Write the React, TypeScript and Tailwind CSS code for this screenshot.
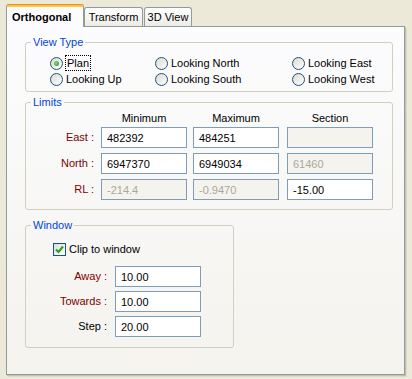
import React from "react";

function Radio({ checked }: { checked?: boolean }) {
  return (
    <span className="flex h-[13px] w-[13px] shrink-0 items-center justify-center rounded-full border border-[#1C5180] bg-linear-to-br from-[#DCD9CE] to-white">
      {checked && (
        <span className="h-[5px] w-[5px] rounded-full bg-[radial-gradient(circle_at_40%_40%,#7FDC7F,#1A961A)]" />
      )}
    </span>
  );
}

function RadioOption({ label, checked }: { label: string; checked?: boolean }) {
  return (
    <div className="flex h-[16px] items-center">
      <Radio checked={checked} />
      {checked ? (
        <span className="ml-[2px] border border-dotted border-black px-[1px] leading-[14px]">{label}</span>
      ) : (
        <span className="ml-[3px]">{label}</span>
      )}
    </div>
  );
}

function Field({ value, disabled }: { value: string; disabled?: boolean }) {
  return (
    <input
      readOnly
      value={value}
      className={
        "h-[21px] w-[86px] border border-[#7F9DB9] px-[5px] text-[11px] outline-none " +
        (disabled ? "bg-[#F4F3EE] text-[#ACA899]" : "bg-white text-black")
      }
    />
  );
}

function Group({ title, className, children }: { title: string; className: string; children: React.ReactNode }) {
  return (
    <fieldset className={"rounded-[3px] border border-[#D0D0BF] " + className}>
      <legend className="ml-[5px] px-[2px] leading-[13px] text-[#0046D5]">{title}</legend>
      {children}
    </fieldset>
  );
}

const limits = [
  { label: "East :", cells: [["482392"], ["484251"], ["", true]] },
  { label: "North :", cells: [["6947370"], ["6949034"], ["61460", true]] },
  { label: "RL :", cells: [["-214.4", true], ["-0.9470", true], ["-15.00"]] },
] as { label: string; cells: [string, boolean?][] }[];

export default function App() {
  return (
    <div className="h-[379px] w-[412px] bg-[#ECE9D8] pl-[6px] pt-[4px] font-['Liberation_Sans',Arial,sans-serif] text-[11px] text-black">
      {/* tabs */}
      <div className="flex h-[22px] items-end">
        <div className="relative z-10 -mb-px flex h-[23px] w-[78px] flex-col rounded-t-[3px] border-x border-[#919B9C] bg-[#FCFCFE]">
          <div className="h-[1px] rounded-t-[3px] bg-[#E68B2C]" />
          <div className="h-[2px] bg-[#FFC73C]" />
          <div className="pl-[5px] pt-[4px] font-bold leading-[13px]">Orthogonal</div>
        </div>
        <div className="flex h-[19px] w-[59px] items-center justify-center rounded-t-[3px] border-x border-t border-[#919B9C] bg-linear-to-b from-white to-[#ECEBE6]">
          Transform
        </div>
        <div className="ml-[1px] flex h-[19px] w-[48px] items-center justify-center rounded-t-[3px] border-x border-t border-[#919B9C] bg-linear-to-b from-white to-[#ECEBE6]">
          3D View
        </div>
      </div>

      {/* panel */}
      <div className="h-[349px] w-[399px] border border-[#919B9C] bg-linear-to-b from-[#FCFCFE] to-[#F4F3EE] pl-[18px] shadow-[1px_1px_0_#C4C1B2,2px_2px_0_#DCD9CA]">
        <Group title="View Type" className="mt-[9px] h-[56px] w-[368px]">
          <div className="mt-[6px] flex pl-[24px]">
            <div className="w-[105px]">
              <RadioOption label="Plan" checked />
              <RadioOption label="Looking Up" />
            </div>
            <div className="w-[137px]">
              <RadioOption label="Looking North" />
              <RadioOption label="Looking South" />
            </div>
            <div>
              <RadioOption label="Looking East" />
              <RadioOption label="Looking West" />
            </div>
          </div>
        </Group>

        <Group title="Limits" className="mt-[4px] h-[114px] w-[368px]">
          <div className="mt-[3px] flex h-[13px] items-center leading-[13px]">
            <div className="w-[75px]" />
            <div className="w-[86px] text-center">Minimum</div>
            <div className="ml-[6px] w-[86px] text-center">Maximum</div>
            <div className="ml-[8px] w-[86px] text-center">Section</div>
          </div>
          <div className="mt-[2px] flex flex-col gap-[5px]">
            {limits.map((row) => (
              <div key={row.label} className="flex items-center">
                <div className="w-[68px] text-right text-[#800000]">{row.label}</div>
                <div className="ml-[7px]">
                  <Field value={row.cells[0][0]} disabled={row.cells[0][1]} />
                </div>
                <div className="ml-[6px]">
                  <Field value={row.cells[1][0]} disabled={row.cells[1][1]} />
                </div>
                <div className="ml-[8px]">
                  <Field value={row.cells[2][0]} disabled={row.cells[2][1]} />
                </div>
              </div>
            ))}
          </div>
        </Group>

        <Group title="Window" className="mt-[9px] h-[129px] w-[209px]">
          <div className="mt-[10px] flex h-[15px] items-center pl-[27px]">
            <span className="flex h-[13px] w-[13px] items-center justify-center border border-[#1C5180] bg-linear-to-br from-[#DCDCD7] to-white">
              <svg width="9" height="9" viewBox="0 0 9 9">
                <path d="M1 4.5 L3.5 7 L8 1.5" fill="none" stroke="#21A121" strokeWidth="2" />
              </svg>
            </span>
            <span className="ml-[3px]">Clip to window</span>
          </div>
          <div className="mt-[9px] flex flex-col gap-[4px]">
            {[
              ["Away :", "10.00", "text-[#800000]"],
              ["Towards :", "10.00", "text-[#800000]"],
              ["Step :", "20.00", "text-black"],
            ].map(([label, value, color]) => (
              <div key={label} className="flex items-center">
                <div className={"w-[81px] text-right " + color}>{label}</div>
                <div className="ml-[8px]">
                  <Field value={value} />
                </div>
              </div>
            ))}
          </div>
        </Group>
      </div>
    </div>
  );
}
